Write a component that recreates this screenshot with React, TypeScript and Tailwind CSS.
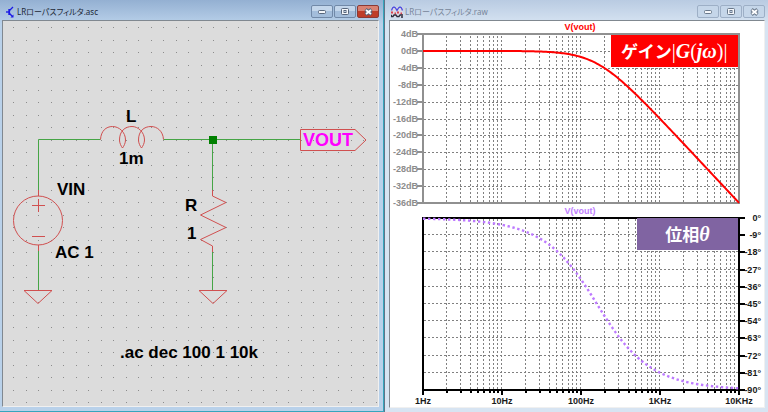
import type { ReactNode } from "react";
import clsx from "clsx";

// RL low-pass filter: L = 1mH, R = 1ohm
const CUTOFF_HZ = 1 / (2 * Math.PI * 0.001);

const LEFT = 423;
const RIGHT = 739;
const DECADE = (RIGHT - LEFT) / 4;
const GAIN = { top: 34, bottom: 203 };
const PHASE = { top: 218, bottom: 390 };

const xOf = (decades: number) => LEFT + decades * DECADE;
const gainY = (db: number) =>
  GAIN.top + ((4 - db) / 40) * (GAIN.bottom - GAIN.top);
const phaseY = (deg: number) =>
  PHASE.top + (-deg / 90) * (PHASE.bottom - PHASE.top);

const GAIN_TICKS = [4, 0, -4, -8, -12, -16, -20, -24, -28, -32, -36];
const PHASE_TICKS = [0, -9, -18, -27, -36, -45, -54, -63, -72, -81, -90];
const FREQ_LABELS = ["1Hz", "10Hz", "100Hz", "1KHz", "10KHz"];

const FREQ_LINES = [0, 1, 2, 3].flatMap((d) =>
  [2, 3, 4, 5, 6, 7, 8, 9, 10].map((n) => ({
    x: Math.round(xOf(d + Math.log10(n))),
    major: n === 10,
  })),
);

function trace(y: (ratio: number) => number) {
  const points: string[] = [];
  for (let i = 0; i <= 200; i++) {
    const decades = i / 50;
    const ratio = 10 ** decades / CUTOFF_HZ;
    points.push(`${xOf(decades).toFixed(2)},${y(ratio).toFixed(2)}`);
  }
  return points.join(" ");
}

const gainTrace = trace((r) => gainY(-10 * Math.log10(1 + r * r)));
const phaseTrace = trace((r) => phaseY((-Math.atan(r) * 180) / Math.PI));

function gridDots() {
  let d = "";
  for (let row = 0; row < 31; row++) {
    for (let col = 0; col < 30; col++) {
      d += `M${Math.round(13 + col * 12.5)} ${Math.round(27 + row * 12.5)}h1v1h-1z`;
    }
  }
  return d;
}

function WindowButtons({ active }: { active?: boolean }) {
  const base =
    "flex h-[13px] w-[22px] items-center justify-center rounded-[2px] border";
  const plain = active
    ? "border-[#7189a8] bg-linear-to-b from-[#c3d6eb] from-50% to-[#a3bddb] to-50%"
    : "border-[#9dafc6] bg-[#c5d6e9]";
  const line = active ? "#56657a" : "#69788b";
  return (
    <div className="flex gap-px pt-[5px]">
      <button type="button" aria-label="Minimize" className={clsx(base, plain)}>
        <svg width="8" height="4" viewBox="0 0 8 4" aria-hidden="true">
          <rect x="0.5" y="0.5" width="7" height="3" rx="1" fill="#f5f7fa" stroke={line} />
        </svg>
      </button>
      <button type="button" aria-label="Maximize" className={clsx(base, plain)}>
        <svg width="8" height="7" viewBox="0 0 8 7" aria-hidden="true">
          <rect x="0.5" y="0.5" width="7" height="6" rx="1" fill="#f5f7fa" stroke={line} />
          <rect x="3" y="2.5" width="2" height="2" fill="#b8c7d9" stroke={line} />
        </svg>
      </button>
      <button
        type="button"
        aria-label="Close"
        className={clsx(
          base,
          active
            ? "border-[#8a3a35] bg-linear-to-b from-[#d98272] from-50% to-[#bf3d28] to-50%"
            : plain,
        )}
      >
        <svg width="9" height="8" viewBox="0 0 9 8" aria-hidden="true">
          <path d="M1.5 1.5L7.5 6.5M7.5 1.5L1.5 6.5" stroke={line} strokeWidth="3.6" />
          <path d="M2 2L7 6M7 2L2 6" stroke="#fff" strokeWidth="1.8" />
        </svg>
      </button>
    </div>
  );
}

function TitleBar({ icon, title, active }: { icon: ReactNode; title: string; active?: boolean }) {
  return (
    <header className="flex h-5 items-start justify-between">
      <div className="flex h-5 items-center gap-0.5 pt-1">
        {icon}
        <h2
          className={clsx(
            "font-['Noto_Sans','Noto_Sans_CJK_JP',sans-serif] text-[8px] leading-[10px] [font-feature-settings:'palt'] whitespace-nowrap",
            active ? "text-[#1c2836]" : "text-[#78869a]",
          )}
        >
          {title}
        </h2>
      </div>
      <WindowButtons active={active} />
    </header>
  );
}

function TransistorIcon() {
  return (
    <svg width="9" height="12" viewBox="0 0 9 12" fill="none" stroke="#1a1ae6" aria-hidden="true">
      <path d="M0 6H3" strokeWidth="1.4" />
      <path d="M3.2 3V9" strokeWidth="1.8" />
      <path d="M3.5 4.5L7 1" strokeWidth="1.2" />
      <path d="M3.5 7.5L6.5 10.5" strokeWidth="1.4" />
      <path d="M7.5 11.5H4.5L7.5 8.5Z" fill="#1a1ae6" stroke="none" />
    </svg>
  );
}

function WaveIcon() {
  return (
    <svg width="12" height="12" viewBox="0 0 12 12" fill="none" aria-hidden="true">
      <rect y="1" width="12" height="10" fill="#dcd9e4" />
      <path d="M0.5 4.5L1.5 2L3 1L4.5 2L6 4.5L7.5 2L9 1L10.500 2L11.5 4.5" stroke="#4a4ae0" strokeWidth="1.3" />
      <path d="M0 6.500H2M3.500 7.5H5M6 6.500H8M9.500 7.5H11" stroke="#d8434e" strokeWidth="1.8" />
      <path d="M0 10.5H2L3 9H5L6 10.5H8L9 9H12M0 9.500H1M10 11H12" stroke="#2c2c3c" strokeWidth="1.3" />
    </svg>
  );
}

function Schematic() {
  return (
    <svg
      viewBox="3 21 375 385"
      className="block h-auto w-full bg-[#dcdcdc]"
      role="img"
      aria-label="LR low-pass filter schematic"
    >
      <path d={gridDots()} fill="#8c8c8c" />
      <g fill="none" stroke="#46a546">
        <path d="M38.5 190V139.5H100.5M163.5 139.5H300.5" />
        <path d="M212.5 139.5V190M212.5 251V290M38.5 251V290" />
      </g>
      <rect x="209" y="136" width="8" height="8" fill="#008000" />
      <g fill="none" stroke="#d05050">
        <path d="M100.5 139.5C101 131 106 126.5 112.5 126.5C119 126.5 125.5 132 125.5 140C125.5 143 124 146 122.5 148C121 146 119.5 143 119.5 140C119.5 131 125 126.5 132 126.5C138 126.5 144.5 132 144.5 140C144.5 143 143 146 141.5 148C140 146 138.5 143 138.5 140C138.5 131 144 126.5 151 126.5C157 126.5 163 131 163.5 139.5" />
        <circle cx="38" cy="220.5" r="24.5" />
        <path d="M38.5 190V196M38.5 245V251M32 205.5H45M38.5 199V212M32 236.5H45" />
        <path d="M24 290.5H52L38 303.5Z" />
        <path d="M212.5 190V196L226 202.5L200.5 215L226 227.5L200.5 239.5L212.5 246V252" />
        <path d="M199 290.5H227L213 303.5Z" />
        <path d="M300.5 129.5H355L366 140L355 150.5H300.5Z" />
      </g>
      <g className="font-['Liberation_Sans',Arial,sans-serif] text-[17px] font-bold" fill="#000">
        <text x="126" y="122">L</text>
        <text x="119" y="164">1m</text>
        <text x="57" y="195">VIN</text>
        <text x="55" y="258">AC 1</text>
        <text x="185" y="211">R</text>
        <text x="187" y="239">1</text>
        <text x="120" y="358">.ac dec 100 1 10k</text>
        <text x="303" y="146" fill="#ff00ff" className="text-[18px]">VOUT</text>
      </g>
    </svg>
  );
}

function BodePlot() {
  return (
    <svg
      viewBox="390 21 374 386"
      className="block h-auto w-full bg-white font-['Liberation_Sans',Arial,sans-serif] text-[9px] font-bold"
      role="img"
      aria-label="Gain and phase of V(vout)"
    >
      <g stroke="#808080" strokeDasharray="2 2">
        {FREQ_LINES.map(({ x }) => (
          <path key={x} d={`M${x - 0.5} 36V202M${x - 0.5} 219V389`} />
        ))}
        {GAIN_TICKS.map((db) => (
          <path key={db} d={`M424 ${Math.round(gainY(db)) + 0.5}H738`} />
        ))}
        {PHASE_TICKS.map((deg) => (
          <path key={deg} d={`M424 ${Math.round(phaseY(deg)) - 0.5}H738`} />
        ))}
      </g>

      <g stroke="#909090" strokeWidth="2" fill="none">
        <rect x={LEFT} y={GAIN.top} width={RIGHT - LEFT} height={GAIN.bottom - GAIN.top} />
        {GAIN_TICKS.map((db) => (
          <path key={db} d={`M417 ${Math.round(gainY(db))}H423`} />
        ))}
      </g>
      <g fill="#8c8c8c" textAnchor="end">
        {GAIN_TICKS.map((db) => (
          <text key={db} x="418" y={Math.round(gainY(db)) + 3}>
            {db}dB
          </text>
        ))}
      </g>

      <g stroke="#000" strokeWidth="2" fill="none">
        <rect x={LEFT} y={PHASE.top} width={RIGHT - LEFT} height={PHASE.bottom - PHASE.top} />
        {PHASE_TICKS.map((deg) => (
          <path key={deg} d={`M739 ${Math.round(phaseY(deg))}H745`} />
        ))}
        <path d="M423 390V395" />
        {FREQ_LINES.map(({ x, major }) => (
          <path key={x} d={`M${x} 390V${major ? 395 : 393}`} />
        ))}
      </g>
      <g fill="#1a1a1a" textAnchor="end">
        {PHASE_TICKS.map((deg) => (
          <text key={deg} x="761" y={Math.round(phaseY(deg)) + 3}>
            {deg}°
          </text>
        ))}
      </g>
      <g fill="#1a1a1a" textAnchor="middle">
        {FREQ_LABELS.map((label, i) => (
          <text key={label} x={xOf(i)} y="404">
            {label}
          </text>
        ))}
      </g>

      <text x="580" y="30" textAnchor="middle" fill="#ff0000">V(vout)</text>
      <text x="580" y="214" textAnchor="middle" fill="#c080ff">V(vout)</text>
      <polyline points={gainTrace} fill="none" stroke="#ff0000" strokeWidth="2" />
      <polyline points={phaseTrace} fill="none" stroke="#bd7aff" strokeWidth="2.4" strokeDasharray="2.4 2.6" />
    </svg>
  );
}

function MathText({ children }: { children: ReactNode }) {
  return (
    <span className="font-['Liberation_Serif','Times_New_Roman',serif] text-xl leading-5">
      {children}
    </span>
  );
}

export default function App() {
  const badge =
    "absolute flex h-8 items-center justify-center font-['Noto_Sans_CJK_JP',sans-serif] text-[17px] leading-5 font-bold whitespace-nowrap text-white";
  return (
    <main className="grid min-h-screen grid-cols-2 items-start bg-[#b9d1ea]">
      <section className="border-r border-b border-[#35a5bd] bg-linear-to-b from-[#94b0d2] to-[#b9d1ea] to-[24px] pr-1 pb-1 pl-0.5">
        <div className="pl-1">
          <TitleBar active icon={<TransistorIcon />} title="LRローパスフィルタ.asc" />
        </div>
        <div className="border border-t-[#808890] border-r-[#f0f0f0] border-b-[#f0f0f0] border-l-[#808890]">
          <Schematic />
        </div>
      </section>

      <section className="border-l border-[#5f7488] bg-linear-to-b from-[#b9cbe2] to-[#d7e4f2] to-[24px] pr-[3px] pb-1 pl-1">
        <div className="pl-0.5">
          <TitleBar icon={<WaveIcon />} title="LRローパスフィルタ.raw" />
        </div>
        <div className="relative border border-t-[#808890] border-r-[#f0f0f0] border-b-[#f0f0f0] border-l-[#808890]">
          <BodePlot />
          <div className={clsx(badge, "top-[3.5%] right-[7%] w-[34%] bg-[#ff0000]")}>
            <span>ゲイン</span>
            <MathText>
              <span className="font-normal">|</span>
              <i>G</i>
              <span className="font-normal">(</span>
              <i>jω</i>
              <span className="font-normal">)|</span>
            </MathText>
          </div>
          <div className={clsx(badge, "top-[51%] right-[7%] w-[27%] bg-[#8064a2]")}>
            <span>位相</span>
            <MathText>
              <i>θ</i>
            </MathText>
          </div>
        </div>
      </section>
    </main>
  );
}
